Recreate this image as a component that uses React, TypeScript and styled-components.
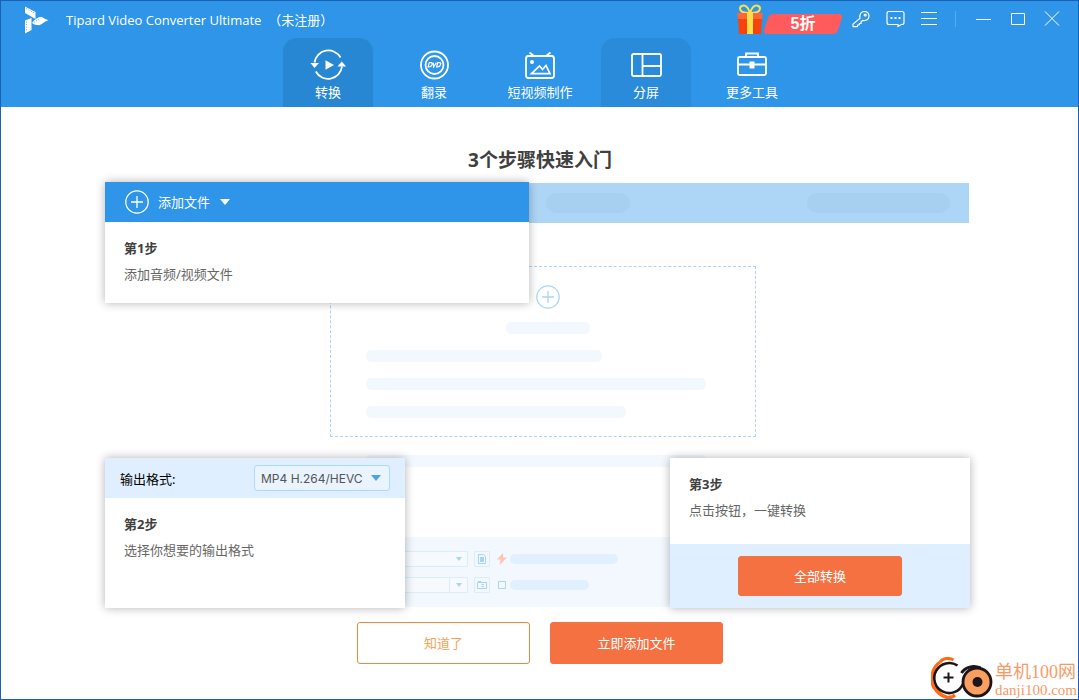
import React from 'react';
import styled, { createGlobalStyle } from 'styled-components';

const UI_FONT = '"Noto Sans", "Noto Sans CJK SC", sans-serif';

const GlobalStyle = createGlobalStyle`
  *, *::before, *::after { box-sizing: border-box; }
  body { margin: 0; background: #fff; }
  body, button, select { font-family: ${UI_FONT}; font-size: 13px; }
  button { margin: 0; padding: 0; border: 0; background: none; color: inherit; cursor: pointer; }
  h1, h2, p { margin: 0; }
  svg { display: block; flex: none; }
`;

const AppWindow = styled.div`
  position: relative;
  display: flex;
  flex-direction: column;
  min-height: 100vh;
  border: 1px solid #1d5fb4;
  background: #fff;
`;

const Header = styled.header`
  background: #2e95e8;
  color: #fff;
`;

const TitleBar = styled.div`
  display: flex;
  align-items: center;
  height: 37px;
  padding: 0 9px 0 23px;
`;

const AppTitle = styled.h1`
  margin-left: 16px;
  font-size: 13px;
  line-height: 20px;
  font-weight: 400;
  white-space: pre;
`;

const ProductName = styled.span`
  font-family: "Open Sans", "Noto Sans", sans-serif;
  font-size: 13px;
`;

const Unregistered = styled.span`
  margin-left: 7px;
  font-family: "Noto Sans CJK SC", sans-serif;
`;

const TitleActions = styled.div`
  display: flex;
  align-items: center;
  margin-left: auto;
  padding-bottom: 2px;
`;

const OfferButton = styled.button`
  display: flex;
  align-items: flex-end;
  height: 30px;
  margin-right: 1px;
`;

const OfferTag = styled.span`
  position: relative;
  display: flex;
  align-items: center;
  justify-content: center;
  width: 80px;
  height: 20px;
  font-family: "Liberation Sans", "Noto Sans CJK SC", sans-serif;
  font-size: 16px;
  line-height: 20px;
  font-weight: 700;

  &::before {
    content: '';
    position: absolute;
    inset: 0 3px;
    border-radius: 4px;
    background: #ff5a5c;
    transform: skewX(-18deg);
  }
`;

const OfferText = styled.span`
  position: relative;
`;

const IconButton = styled.button`
  display: flex;
  align-items: center;
  justify-content: center;
  width: 34px;
  height: 30px;
`;

const BarDivider = styled.span`
  width: 1px;
  height: 16px;
  margin: 0 11px 0 9px;
  background: #59abee;
`;

const Tabs = styled.nav`
  display: flex;
  justify-content: center;
  gap: 16px;
  padding-left: 1px;
`;

const Tab = styled.button<{ $tone?: 'active' | 'hover' }>`
  display: flex;
  flex-direction: column;
  align-items: center;
  width: 90px;
  height: 69px;
  padding-top: 10px;
  border-radius: 14px 14px 0 0;
  line-height: 20px;
  white-space: nowrap;
  background: ${p => (p.$tone === 'active' ? '#2887d3' : p.$tone === 'hover' ? '#2a8bdb' : 'transparent')};
`;

const Main = styled.main`
  display: flex;
  flex-direction: column;
  align-items: center;
  padding: 38px 4px 32px 0;
`;

const Heading = styled.h2`
  margin-bottom: 7px;
  padding-left: 5px;
  color: #404040;
  font-size: 19px;
  line-height: 30px;
  font-weight: 700;
`;

/* The wireframe and the three step cards share one grid cell. */
const Stage = styled.div`
  display: grid;
  grid-template-columns: 865px;
  grid-template-rows: auto;
  & > * { grid-area: 1 / 1; }
`;

const Wireframe = styled.div`
  padding: 1px 1px 1px 0;
`;

const WireHeader = styled.div`
  display: flex;
  align-items: center;
  justify-content: flex-end;
  gap: 177px;
  height: 40px;
  padding-right: 19px;
  background: #add5f6;
`;

const Pill = styled.span<{ $width: number; $kind?: 'header' | 'option' }>`
  display: block;
  width: ${p => p.$width}px;
  height: ${p => (p.$kind === 'header' ? 20 : p.$kind === 'option' ? 10 : 12)}px;
  border-radius: ${p => (p.$kind === 'header' ? 10 : 5)}px;
  background: ${p => (p.$kind === 'header' ? '#a7cff0' : p.$kind === 'option' ? '#e0f0ff' : '#f3f8ff')};
`;

const DropZone = styled.div`
  display: flex;
  flex-direction: column;
  gap: 16px;
  width: 426px;
  margin: 43px 0 18px 225px;
  padding: 18px 25px 18px 35px;
  border: 1px dashed #abd4f5;
`;

const DropIntro = styled.div`
  display: flex;
  flex-direction: column;
  align-items: center;
  gap: 13px;
`;

const WireCaption = styled.div`
  padding-left: 261px;
`;

const WireFooter = styled.div`
  display: flex;
  flex-direction: column;
  gap: 10px;
  margin-top: 70px;
  padding: 14px 0 14px 225px;
  background: #f3f8ff;
`;

const WireRow = styled.div`
  display: flex;
  align-items: center;
`;

const WireField = styled.span<{ $split?: boolean }>`
  display: flex;
  justify-content: flex-end;
  width: 138px;
  height: 16px;
  margin-right: 6px;
  border: 1px solid #daedfb;
  border-radius: 1px;
  background: #f6faff;

  & > span {
    display: flex;
    align-items: center;
    justify-content: center;
    width: 18px;
    border-left: 1px solid ${p => (p.$split ? '#daedfb' : 'transparent')};
  }
`;

const WireIcon = styled.span<{ $boxed?: boolean }>`
  display: flex;
  align-items: center;
  justify-content: center;
  width: 16px;
  height: 16px;
  margin-left: ${p => (p.$boxed ? 0 : 4)}px;
  border: ${p => (p.$boxed ? '1px solid #daedfb' : '0')};
  border-radius: 1px;
`;

const StepCard = styled.section<{ $place: 'top' | 'left' | 'right' }>`
  z-index: 1;
  display: flex;
  flex-direction: column;
  width: ${p => (p.$place === 'top' ? 424 : 300)}px;
  min-height: ${p => (p.$place === 'top' ? 121 : 150)}px;
  align-self: ${p => (p.$place === 'top' ? 'start' : 'end')};
  justify-self: ${p => (p.$place === 'right' ? 'end' : 'start')};
  background: #fff;
  box-shadow: 0 0 9px rgba(0, 0, 0, 0.3);
`;

const AddFileButton = styled.button`
  display: flex;
  align-items: center;
  height: 40px;
  padding: 0 20px;
  background: #2e95e8;
  color: #fff;
  line-height: 20px;

  & > span { margin: 0 10px 0 9px; }
`;

const FormatBar = styled.div`
  display: flex;
  align-items: center;
  justify-content: space-between;
  height: 40px;
  padding: 0 15px;
  background: #e0efff;
  color: #000;
`;

const SelectWrap = styled.span`
  display: grid;
  align-items: center;
  & > * { grid-area: 1 / 1; }
  & > svg { justify-self: end; margin-right: 9px; pointer-events: none; }
`;

const FormatSelect = styled.select`
  appearance: none;
  width: 136px;
  height: 26px;
  padding: 0 24px 0 6px;
  border: 1px solid #add9fc;
  border-radius: 3px;
  background: #eaf4ff;
  color: #555;
  font-family: Inter, sans-serif;
  font-size: 12px;
`;

const StepBody = styled.div`
  flex: 1;
  padding: 13px 19px 16px;
  line-height: 26px;
`;

const StepTitle = styled.h2`
  color: #404040;
  font-size: 13px;
  line-height: 26px;
  font-weight: 700;
`;

const StepText = styled.p`
  color: #666;
`;

const ConvertBar = styled.div`
  display: flex;
  justify-content: center;
  padding: 12px 0;
  background: #e0efff;
`;

const ActionButton = styled.button<{ $kind: 'convert' | 'primary' | 'outline' }>`
  width: ${p => (p.$kind === 'convert' ? 164 : 173)}px;
  height: ${p => (p.$kind === 'convert' ? 40 : 42)}px;
  padding-bottom: 2px;
  border: 1px solid ${p => (p.$kind === 'outline' ? '#e98a3d' : '#f57142')};
  border-radius: 3px;
  background: ${p => (p.$kind === 'outline' ? '#fff' : '#f57142')};
  color: ${p => (p.$kind === 'outline' ? '#f9a25c' : '#fff')};
`;

const Actions = styled.div`
  display: flex;
  justify-content: center;
  gap: 20px;
  margin-top: 14px;
  padding-left: 5px;
`;

const SiteMark = styled.a`
  position: absolute;
  right: 1px;
  bottom: 0;
  display: flex;
  align-items: flex-end;
  gap: 2px;
  color: #f99a66;
  text-decoration: none;
`;

const SiteText = styled.span`
  display: flex;
  flex-direction: column;
  font-family: "Liberation Serif", "Noto Sans CJK SC", serif;
`;

const SiteName = styled.span`
  font-size: 18px;
  line-height: 18px;
`;

const SiteDomain = styled.span`
  font-size: 15px;
  line-height: 18px;
`;

const Caret = ({ width, height, color }: { width: number; height: number; color: string }) => (
  <svg width={width} height={height} viewBox="0 0 10 6" preserveAspectRatio="none" aria-hidden="true">
    <path d="M0 0h10L5 6z" fill={color} />
  </svg>
);

const PlusCircle = ({ color }: { color: string }) => (
  <svg width="24" height="24" viewBox="0 0 24 24" fill="none" stroke={color} aria-hidden="true">
    <circle cx="12" cy="12" r="11.2" strokeWidth="1.2" />
    <path d="M6 12h12M12 6v12" strokeWidth="1.3" />
  </svg>
);

const Logo = () => (
  <svg width="26" height="28" viewBox="0 0 26 28" aria-hidden="true">
    <path d="M1 .5 11.500 6v7L1 7z" fill="#fff" />
    <path d="M1 14.500 7.500 12v12L1 27.500z" fill="#fff" />
    <path d="M8 17c3-4 6-6 9.500-6.200 2 1.500 4.500 2.700 7 3.500-4 .7-6 4-9.500 5-3-.2-5-.8-7-2.300z" fill="#fff" />
    <path d="M2.200 2.700 10.500 7.200M2.500 15.500v10M10 16.500l6-4.300" stroke="#2e95e8" strokeWidth=".7" strokeDasharray="1 1.600" />
  </svg>
);

const Gift = () => (
  <svg width="26" height="30" viewBox="0 0 26 30" aria-hidden="true">
    <path d="M13 9C9 9 3 8 3 4.500 3 1.500 7.500.5 10 3.200 11.500 5 12.500 7 13 9zM13 9c4 0 10-1 10-4.500C23 1.500 18.500.5 16 3.200 14.500 5 13.500 7 13 9z" fill="none" stroke="#ffe04a" strokeWidth="2" />
    <path d="M1 14h24l-1 16H2z" fill="#f8430c" />
    <path d="M0 9h26l-1 6H1z" fill="#ff6636" />
    <path d="M10 9h6v21h-6z" fill="#ffe04a" />
  </svg>
);

const KeyIcon = () => (
  <svg width="18" height="18" viewBox="0 0 18 18" fill="none" stroke="#fff" strokeWidth="1.200" strokeLinejoin="round" aria-hidden="true">
    <path d="M8 8.200C7.200 4.500 9 1.500 12.200 1.500c3 0 4.800 2 4.800 4.700 0 3-3 5-6.500 4.200L9 12v1.500H7.200V15H5.500v1.600H1v-2.500z" />
    <circle cx="13.200" cy="5" r="1" />
  </svg>
);

const ChatIcon = () => (
  <svg width="19" height="18" viewBox="0 0 19 18" fill="none" stroke="#fff" strokeWidth="1.200" aria-hidden="true">
    <path d="M3 1.500h13q2 0 2 2v9q0 2-2 2h-.7l-3.300 2v-2H3q-2 0-2-2v-9q0-2 2-2z" />
    <path d="M4.500 8h2M8.500 8h2M12.500 8h2" strokeWidth="2" />
  </svg>
);

const MenuIcon = () => (
  <svg width="16" height="14" viewBox="0 0 16 14" stroke="#fff" aria-hidden="true">
    <path d="M0 .5h16M0 6.500h16M0 12.500h16" />
  </svg>
);

const MinimizeIcon = () => (
  <svg width="16" height="2" viewBox="0 0 16 2" stroke="#fff" aria-hidden="true">
    <path d="M0 1.500h15" />
  </svg>
);

const MaximizeIcon = () => (
  <svg width="14" height="12" viewBox="0 0 14 12" fill="none" stroke="#fff" aria-hidden="true">
    <path d="M.5.5h13v11H.5z" />
  </svg>
);

const CloseIcon = () => (
  <svg width="16" height="15" viewBox="0 0 16 15" stroke="#fff" strokeWidth="1" aria-hidden="true">
    <path d="M1 .5l14 14M15 .5l-14 14" />
  </svg>
);

const TabIcon = ({ children }: { children: React.ReactNode }) => (
  <svg width="36" height="34" viewBox="0 0 36 34" fill="none" stroke="#fff" strokeWidth="1.800" aria-hidden="true">
    {children}
  </svg>
);

const ConvertIcon = () => (
  <TabIcon>
    <path d="M4.500 14.500A14 14 0 0 1 30.500 9.500M5.800 23.500A14 14 0 0 0 32 18.500" />
    <path d="M.5 15h8.500L4.500 20z" fill="#fff" stroke="none" />
    <path d="M27.500 18.500H36l-4.200-5z" fill="#fff" stroke="none" />
    <path d="M15.500 12.200v9.600l8.500-4.800z" fill="#fff" stroke="none" />
  </TabIcon>
);

const DvdIcon = () => (
  <TabIcon>
    <circle cx="18.500" cy="17" r="13.500" />
    <circle cx="18.500" cy="17" r="9" strokeWidth="1.800" />
    <path d="M13.300 14.700h1.600c1.700 0 1.500 1.200 1 2.300s-1.300 2-3 2h-.8zM17.300 14.700l.3 4.300 2.800-4.300M21.800 14.700h1.600c1.700 0 1.500 1.200 1 2.300s-1.300 2-3 2h-.8z" strokeWidth="1.200" />
  </TabIcon>
);

const MvIcon = () => (
  <TabIcon>
    <rect x="4" y="8" width="28" height="22" rx="2.500" />
    <path d="M7.500 4.500 12 8M28.500 4.500 24 8" />
    <circle cx="10" cy="14" r="2" fill="#fff" stroke="none" />
    <path d="M9.500 25.700 17.500 18l3 3.500 3.500-4 4 8.200z" strokeWidth="1.700" />
  </TabIcon>
);

const CollageIcon = () => (
  <TabIcon>
    <rect x="4" y="6" width="29" height="22" rx="1.500" />
    <path d="M14.500 6v22M14.500 18H33" />
  </TabIcon>
);

const ToolboxIcon = () => (
  <TabIcon>
    <rect x="4" y="9" width="28" height="18" rx="1.500" />
    <path d="M12 9V5.500h12V9M4 16.500h28" />
    <path d="M15.500 13.500h5v7h-5z" fill="#fff" stroke="none" />
  </TabIcon>
);

const ProfileIcon = () => (
  <svg width="8" height="10" viewBox="0 0 8 10" fill="none" stroke="#a9d4f6" aria-hidden="true">
    <path d="M.5.5h5L7.500 2.500v7h-7z" />
    <path d="M2 3h4v5H2z" fill="#a9d4f6" stroke="none" />
  </svg>
);

const FolderIcon = () => (
  <svg width="10" height="8" viewBox="0 0 10 8" fill="none" stroke="#a9d4f6" aria-hidden="true">
    <path d="M.5 7.500v-6h9v6zM1 .5h3M4.500 3.500H7M4.500 5.500H7" />
  </svg>
);

const BoltIcon = () => (
  <svg width="10" height="12" viewBox="0 0 10 12" aria-hidden="true">
    <path d="M6 0 0 6.500h3.500L2.500 12 10 4.500H6z" fill="#ffc2b3" />
  </svg>
);

const BoxIcon = () => (
  <svg width="8" height="8" viewBox="0 0 8 8" aria-hidden="true">
    <path d="M.5.5h7v7h-7z" fill="none" stroke="#a9d4f6" />
  </svg>
);

const SiteLogo = () => (
  <svg width="62" height="42" viewBox="0 0 62 42" fill="none" aria-hidden="true">
    <path d="M9 5C12 1 18 .5 22.500 3M3 31C-1.500 23 .5 11 9 5" stroke="#ff6a13" strokeWidth="3" />
    <path d="M3 30C6 35 11 39 16 40.500c3 .4 6-.5 8-2.500" stroke="#ff6a13" strokeWidth="3.500" />
    <path d="M26.500 8.500A15 15 0 1 0 32 27" stroke="#1e1518" strokeWidth="2.600" fill="#fff" />
    <path d="M30.500 16c3.500-6 12-8 19-5" stroke="#1e1518" strokeWidth="3" />
    <circle cx="46" cy="25" r="14" fill="#f9a060" stroke="#1e1518" strokeWidth="2.800" />
    <circle cx="46.500" cy="25" r="5" fill="#1e1518" />
    <path d="M12.500 20.500h10M17.500 15.500v10" stroke="#1e1518" strokeWidth="2" />
  </svg>
);

const TABS: { label: string; icon: React.ReactNode; tone?: 'active' | 'hover' }[] = [
  { label: '转换', icon: <ConvertIcon />, tone: 'active' },
  { label: '翻录', icon: <DvdIcon /> },
  { label: '短视频制作', icon: <MvIcon /> },
  { label: '分屏', icon: <CollageIcon />, tone: 'hover' },
  { label: '更多工具', icon: <ToolboxIcon /> },
];

export default function App() {
  return (
    <>
      <GlobalStyle />
      <AppWindow>
        <Header>
          <TitleBar>
            <Logo />
            <AppTitle>
              <ProductName>Tipard Video Converter Ultimate</ProductName>
              <Unregistered>（未注册）</Unregistered>
            </AppTitle>
            <TitleActions>
              <OfferButton type="button">
                <Gift />
                <OfferTag><OfferText>5折</OfferText></OfferTag>
              </OfferButton>
              <IconButton type="button" aria-label="注册"><KeyIcon /></IconButton>
              <IconButton type="button" aria-label="反馈"><ChatIcon /></IconButton>
              <IconButton type="button" aria-label="菜单"><MenuIcon /></IconButton>
              <BarDivider />
              <IconButton type="button" aria-label="最小化"><MinimizeIcon /></IconButton>
              <IconButton type="button" aria-label="最大化"><MaximizeIcon /></IconButton>
              <IconButton type="button" aria-label="关闭"><CloseIcon /></IconButton>
            </TitleActions>
          </TitleBar>
          <Tabs>
            {TABS.map(tab => (
              <Tab key={tab.label} type="button" $tone={tab.tone}>
                {tab.icon}
                {tab.label}
              </Tab>
            ))}
          </Tabs>
        </Header>

        <Main>
          <Heading>3个步骤快速入门</Heading>
          <Stage>
            <Wireframe aria-hidden="true">
              <WireHeader>
                <Pill $width={84} $kind="header" />
                <Pill $width={143} $kind="header" />
              </WireHeader>
              <DropZone>
                <DropIntro>
                  <PlusCircle color="#abd4f5" />
                  <Pill $width={84} />
                </DropIntro>
                <Pill $width={236} />
                <Pill $width={340} />
                <Pill $width={260} />
              </DropZone>
              <WireCaption><Pill $width={340} /></WireCaption>
              <WireFooter>
                <WireRow>
                  <WireField><span><Caret width={6} height={4} color="#a9d4f6" /></span></WireField>
                  <WireIcon $boxed><ProfileIcon /></WireIcon>
                  <WireIcon><BoltIcon /></WireIcon>
                  <Pill $width={108} $kind="option" />
                </WireRow>
                <WireRow>
                  <WireField $split><span><Caret width={6} height={4} color="#a9d4f6" /></span></WireField>
                  <WireIcon $boxed><FolderIcon /></WireIcon>
                  <WireIcon><BoxIcon /></WireIcon>
                  <Pill $width={79} $kind="option" />
                </WireRow>
              </WireFooter>
            </Wireframe>

            <StepCard $place="top">
              <AddFileButton type="button">
                <PlusCircle color="#fff" />
                <span>添加文件</span>
                <Caret width={10} height={6} color="#fff" />
              </AddFileButton>
              <StepBody>
                <StepTitle>第1步</StepTitle>
                <StepText>添加音频/视频文件</StepText>
              </StepBody>
            </StepCard>

            <StepCard $place="left">
              <FormatBar>
                <label htmlFor="output-format">输出格式:</label>
                <SelectWrap>
                  <FormatSelect id="output-format" defaultValue="hevc">
                    <option value="hevc">MP4 H.264/HEVC</option>
                  </FormatSelect>
                  <Caret width={10} height={6} color="#48a4e8" />
                </SelectWrap>
              </FormatBar>
              <StepBody>
                <StepTitle>第2步</StepTitle>
                <StepText>选择你想要的输出格式</StepText>
              </StepBody>
            </StepCard>

            <StepCard $place="right">
              <StepBody>
                <StepTitle>第3步</StepTitle>
                <StepText>点击按钮，一键转换</StepText>
              </StepBody>
              <ConvertBar>
                <ActionButton type="button" $kind="convert">全部转换</ActionButton>
              </ConvertBar>
            </StepCard>
          </Stage>
          <Actions>
            <ActionButton type="button" $kind="outline">知道了</ActionButton>
            <ActionButton type="button" $kind="primary">立即添加文件</ActionButton>
          </Actions>
        </Main>

        <SiteMark href="#site">
          <SiteLogo />
          <SiteText>
            <SiteName>单机100网</SiteName>
            <SiteDomain>danji100.com</SiteDomain>
          </SiteText>
        </SiteMark>
      </AppWindow>
    </>
  );
}
